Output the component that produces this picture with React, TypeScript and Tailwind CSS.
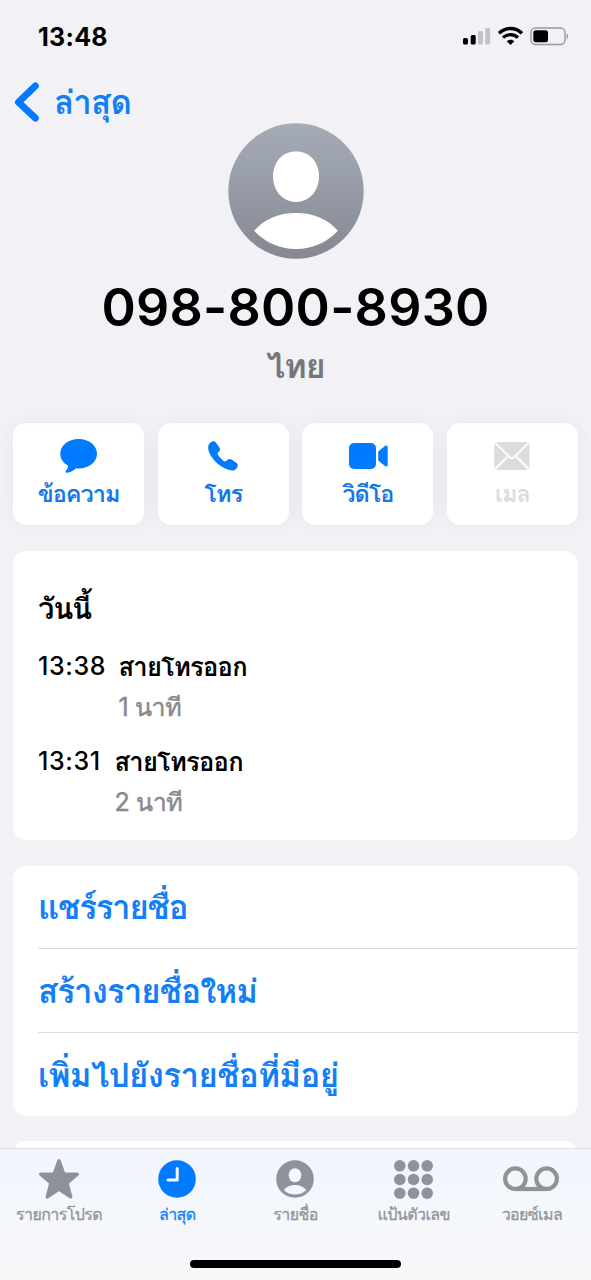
import type { ReactNode } from "react";

type Action = {
  label: string;
  icon: ReactNode;
  labelClass: string;
};

type Call = {
  time: string;
  kind: string;
  duration: string;
  timeClass: string;
};

type Tab = {
  label: string;
  icon: ReactNode;
  active?: boolean;
};

const actions: Action[] = [
  { label: "ข้อความ", icon: <MessageIcon />, labelClass: "text-[#1478e6]" },
  { label: "โทร", icon: <PhoneIcon />, labelClass: "text-[#1478e6]" },
  { label: "วิดีโอ", icon: <VideoIcon />, labelClass: "text-[#1478e6]" },
  { label: "เมล", icon: <MailIcon />, labelClass: "text-[#dcdcdf]" },
];

const calls: Call[] = [
  { time: "13:38", kind: "สายโทรออก", duration: "1 นาที", timeClass: "w-[80.500px]" },
  { time: "13:31", kind: "สายโทรออก", duration: "2 นาที", timeClass: "w-[76.500px]" },
];

const links = [
  { label: "แชร์รายชื่อ", spacing: "tracking-[-1.250px]" },
  { label: "สร้างรายชื่อใหม่", spacing: "tracking-[-0.900px]" },
  { label: "เพิ่มไปยังรายชื่อที่มีอยู่", spacing: "tracking-[-0.600px]" },
];

const tabs: Tab[] = [
  { label: "รายการโปรด", icon: <StarIcon /> },
  { label: "ล่าสุด", icon: <ClockIcon />, active: true },
  { label: "รายชื่อ", icon: <PersonIcon /> },
  { label: "แป้นตัวเลข", icon: <KeypadIcon /> },
  { label: "วอยซ์เมล", icon: <VoicemailIcon /> },
];

function MessageIcon() {
  return (
    <svg width="38" height="34" viewBox="0 0 38 34" fill="#007aff">
      <path d="M18.6 0C29 0 37 6.4 37 14.7S29 29.4 18.6 29.4c-.8 0-1.600-.1-2.300-.2-2.700 2.200-5.800 4-9.300 4.500-1.500.2-2-.9-1.100-1.900 1.500-1.600 2.300-3 2.200-5.200C3.300 24 .3 19.800.3 14.700.3 6.400 8.200 0 18.600 0Z" />
    </svg>
  );
}

function PhoneIcon() {
  return (
    <svg width="30" height="30" viewBox="0 0 30 30" fill="#007aff">
      <path d="M1.800 2.300C3.200.8 4.600.2 5.900.3c1.100.1 1.800.9 2.500 1.900l3 4.300c1 1.500.9 2.900-.2 4l-1.300 1.300c-.5.5-.5 1-.2 1.600 1 1.900 5 5.900 6.900 6.900.6.300 1.100.3 1.600-.2l1.300-1.300c1.100-1.100 2.500-1.200 4-.2l4.400 3c1 .7 1.700 1.400 1.800 2.500.1 1.300-.5 2.700-2 4.100-2.100 2-6.300 1.700-11.500-1.200C8.700 22.900 3.800 17.500 1.400 12-.4 8-.2 4.300 1.800 2.300Z" />
    </svg>
  );
}

function VideoIcon() {
  return (
    <svg width="40" height="26" viewBox="0 0 40 26" fill="#007aff">
      <rect x="1" width="27" height="26" rx="5" />
      <path d="M30.200 8.600 37 2.900c1.300-1 2.700-.3 2.700 1.200v17.800c0 1.500-1.400 2.200-2.700 1.200l-6.800-5.700Z" />
    </svg>
  );
}

function MailIcon() {
  return (
    <svg width="36" height="28" viewBox="0 0 36 28">
      <rect x="0.300" width="35.200" height="28" rx="3" fill="#dcdcdf" />
      <path
        d="M1.200.9 15.600 15.100c1.500 1.500 3.100 1.500 4.600 0L34.600.9M1 27.200 13.500 14.800M34.800 27.200 22.300 14.800"
        fill="none"
        stroke="#fff"
        strokeWidth="2"
      />
    </svg>
  );
}

function StarIcon() {
  return (
    <svg width="42" height="40" viewBox="0 0 42 40">
      <path
        d="M21 1.800 25.800 15.200H39.200L29 24 32.600 37.800 21 30 9.400 37.800 13 24 2.800 15.200H16.200Z"
        fill="#8e9298"
        stroke="#8e9298"
        strokeWidth="3.500"
        strokeLinejoin="round"
      />
    </svg>
  );
}

function ClockIcon() {
  return (
    <svg width="38" height="38" viewBox="0 0 38 38">
      <circle cx="19" cy="19" r="18.800" fill="#007aff" />
      <path d="M19.200 8.500V20H10" fill="none" stroke="#f1f6fe" strokeWidth="3" strokeLinecap="round" strokeLinejoin="round" />
    </svg>
  );
}

function PersonIcon() {
  return (
    <svg width="38" height="38" viewBox="0 0 38 38">
      <circle cx="19" cy="19" r="18.800" fill="#8e9299" />
      <ellipse cx="19" cy="15.200" rx="6.300" ry="7" fill="#f3f7fd" />
      <path d="M7.700 30C10.500 26.600 14.600 25 19 25s8.500 1.600 11.300 5C27.300 33 23.300 34.600 19 34.600S10.700 33 7.700 30Z" fill="#f3f7fd" />
    </svg>
  );
}

function KeypadIcon() {
  const dots = [5.800, 19.500, 33.200];
  return (
    <svg width="39" height="39" viewBox="0 0 39 39" fill="#8f9399">
      {dots.map((y) => dots.map((x) => <circle key={`${x}-${y}`} cx={x} cy={y} r="5.800" />))}
    </svg>
  );
}

function VoicemailIcon() {
  return (
    <svg width="56" height="26" viewBox="0 0 56 26" fill="none" stroke="#929294" strokeWidth="4.200" className="-ml-[2px]">
      <circle cx="12.400" cy="12.700" r="10.300" />
      <circle cx="43.600" cy="12.700" r="10.300" />
      <path d="M12.400 23H43.600" />
    </svg>
  );
}

function StatusBar() {
  return (
    <div className="flex h-[72px] items-center justify-between pr-[22px] pl-[38px]">
      <span className="pt-[2px] text-[25px] leading-[70px] font-bold tracking-[0.300px]">13:48</span>
      <svg width="107" height="20" viewBox="0 0 107 20">
        <rect x="1" y="12" width="5" height="6.500" rx="1.500" />
        <rect x="8.700" y="9" width="5" height="9.500" rx="1.500" />
        <rect x="16" y="5" width="5" height="13.500" rx="1.500" fill="#c3c3c7" />
        <rect x="23.200" y="2" width="5" height="16.500" rx="1.500" fill="#c3c3c7" />
        <path d="M37 7.200C43.700.900 53.300.900 60 7.200" fill="none" stroke="#000" strokeWidth="3.300" />
        <path d="M41 11.500C45.300 7.600 51.700 7.600 56 11.500" fill="none" stroke="#000" strokeWidth="3.200" />
        <path d="M44.700 15.200C47 13.200 50 13.200 52.300 15.200L48.500 18.900Z" />
        <rect x="69" y="2" width="34" height="16.500" rx="4.500" fill="none" stroke="#99999d" strokeWidth="1.400" />
        <rect x="71.300" y="4.300" width="14.700" height="11.900" rx="2.500" />
        <path d="M104.600 7.400C106.700 8 106.700 12.500 104.600 13.100Z" fill="#99999d" />
      </svg>
    </div>
  );
}

function Avatar() {
  return (
    <svg width="136" height="136" viewBox="0 0 136 136">
      <defs>
        <linearGradient id="avatar" x1="0" y1="0" x2="0" y2="1">
          <stop offset="0" stopColor="#a5acb8" />
          <stop offset="1" stopColor="#858892" />
        </linearGradient>
      </defs>
      <circle cx="68" cy="68" r="67.700" fill="url(#avatar)" />
      <path d="M68 28.500c13.500 0 23 10.500 23 24.800S81.500 79 68 79 45 67.600 45 53.300 54.500 28.500 68 28.500Z" fill="#fff" />
      <path d="M26.200 107.800C36 96 51 90 68 90s32 6 41.800 17.800C99 119.500 84.500 126 68 126s-31-6.500-41.800-18.200Z" fill="#fff" />
    </svg>
  );
}

export default function App() {
  return (
    <div className="flex h-[1280px] w-[591px] flex-col overflow-hidden bg-[#f1f1f6] font-[Inter,Loma,'Noto_Sans_Thai',sans-serif] text-black">
      <main className="h-[1148px] overflow-hidden">
        <StatusBar />

        <div className="flex h-[51px] items-start">
          <button type="button" className="flex h-[60px] items-center text-[#147ff5]">
            <svg width="26" height="40" viewBox="0 0 26 40" className="ml-[14px]">
              <path d="M21.300 4 4.500 20.200 21.300 36" fill="none" stroke="#007aff" strokeWidth="7" strokeLinecap="round" strokeLinejoin="round" />
            </svg>
            <span className="ml-[14px] text-[33px] leading-[60px] font-semibold tracking-[-0.800px]">ล่าสุด</span>
          </button>
        </div>

        <header className="flex h-[300px] flex-col items-center">
          <Avatar />
          <h1 className="mt-[14px] text-[52px] leading-[70px] font-semibold tracking-[0.250px] whitespace-nowrap [font-feature-settings:'calt'_0]">098-800-8930</h1>
          <p className="-mt-px text-[34px] leading-[48px] font-semibold tracking-[-1px] text-[#77777a]">ไทย</p>
        </header>

        <div className="grid grid-cols-4 gap-[13.500px] px-[13px]">
          {actions.map((action) => (
            <button
              key={action.label}
              type="button"
              className="flex h-[102px] flex-col items-center rounded-[13px] bg-white shadow-[0_0_18px_rgba(60,60,80,0.06)]"
            >
              <span className="mt-[13px] flex h-[40px] items-center">{action.icon}</span>
              <span className={`text-[23.500px] leading-[36px] font-semibold tracking-[-1px] ${action.labelClass}`}>{action.label}</span>
            </button>
          ))}
        </div>

        <section className="mx-[13px] mt-[26px] h-[289px] rounded-[13px] bg-white px-[25px] pt-[36px]">
          <h2 className="text-[29px] leading-[44px] font-semibold tracking-[-0.900px]">วันนี้</h2>
          {calls.map((call) => (
            <div key={call.time} className="flex h-[95px] pt-[15px] text-[25px] leading-[41px]">
              <span className={`shrink-0 font-medium tracking-[0.600px] ${call.timeClass}`}>{call.time}</span>
              <div>
                <p className="text-[25.500px] font-semibold tracking-[-0.750px]">{call.kind}</p>
                <p className="tracking-[-0.400px] text-[#8a8a8d] [-webkit-text-stroke:0.500px]">{call.duration}</p>
              </div>
            </div>
          ))}
        </section>

        <section className="mx-[13px] mt-[26px] h-[250px] rounded-[13px] bg-white pl-[25px]">
          {links.map((link) => (
            <button
              key={link.label}
              type="button"
              className={`flex h-[84px] w-full items-center border-b border-[#dcdcde] text-[33px] leading-[60px] font-semibold text-[#147ff5] first:h-[83px] last:h-[83px] last:border-0 ${link.spacing}`}
            >
              {link.label}
            </button>
          ))}
        </section>

        <section className="mx-[13px] mt-[25px] h-[60px] rounded-[13px] bg-white" />
      </main>

      <nav className="flex h-[132px] flex-col items-center border-t border-[#dedfe3] bg-linear-to-b from-[#f1f6fd] to-[#f8f8fa]">
        <div className="grid h-[111px] w-full grid-cols-5">
          {tabs.map((tab) => (
            <button
              key={tab.label}
              type="button"
              className={`flex flex-col items-center pt-[10px] ${tab.active ? "text-[#147ff5]" : "text-[#929499]"}`}
            >
              <span className="flex h-[40px] items-center">{tab.icon}</span>
              <span className="text-[16px] leading-[30px] font-medium tracking-[-0.600px] whitespace-nowrap [-webkit-text-stroke:0.300px]">{tab.label}</span>
            </button>
          ))}
        </div>
        <div className="h-[8px] w-[211px] rounded-full bg-black" />
      </nav>
    </div>
  );
}
